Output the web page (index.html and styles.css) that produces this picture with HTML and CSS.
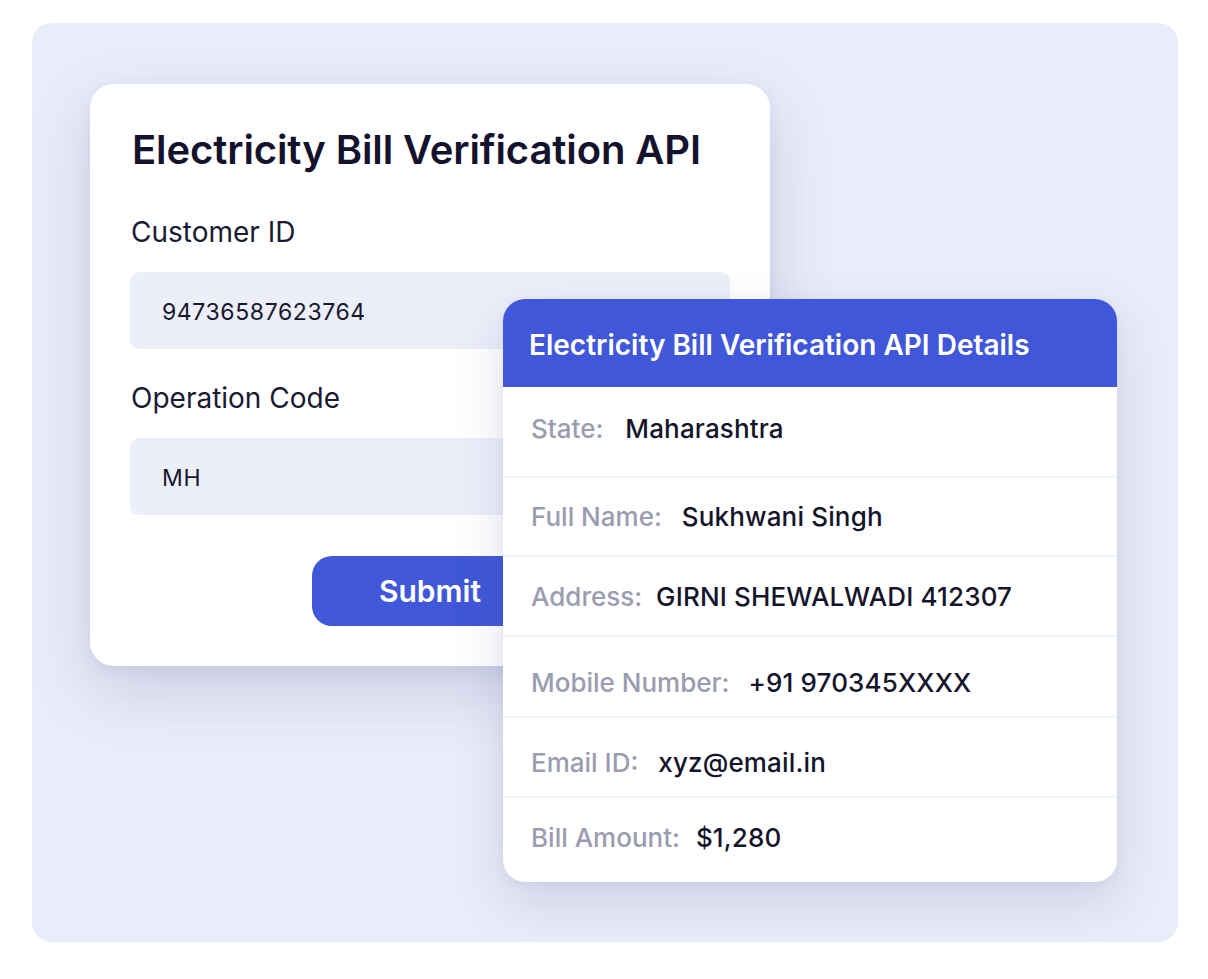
FILE: index.html
```html
<!DOCTYPE html>
<html lang="en">
<head>
<meta charset="utf-8">
<title>Electricity Bill Verification API</title>
<link rel="stylesheet" href="styles.css">
</head>
<body>
<div class="page">
  <div class="panel">
    <div class="form-card">
      <h1 class="form-title">Electricity Bill Verification API</h1>
      <div class="field">
        <div class="field-label">Customer ID</div>
        <div class="field-input">94736587623764</div>
      </div>
      <div class="field">
        <div class="field-label">Operation Code</div>
        <div class="field-input">MH</div>
      </div>
      <div class="actions">
        <button class="submit">Submit</button>
      </div>
    </div>

    <div class="details-card">
      <div class="details-head">Electricity Bill Verification API Details</div>
      <div class="row row-1"><span class="k">State:</span><span class="v">Maharashtra</span></div>
      <div class="row row-2"><span class="k">Full Name:</span><span class="v">Sukhwani Singh</span></div>
      <div class="row row-3"><span class="k">Address:</span><span class="v">GIRNI SHEWALWADI 412307</span></div>
      <div class="row row-4"><span class="k">Mobile Number:</span><span class="v">+91 970345XXXX</span></div>
      <div class="row row-5"><span class="k">Email ID:</span><span class="v">xyz@email.in</span></div>
      <div class="row row-6"><span class="k">Bill Amount:</span><span class="v">$1,280</span></div>
    </div>
  </div>
</div>
</body>
</html>
```

FILE: styles.css
```css
* { box-sizing: border-box; }
html, body { margin: 0; padding: 0; background: #ffffff; }
body {
  font-family: Inter, "Noto Sans", "Liberation Sans", sans-serif;
  color: #14142b;
}
.page {
  padding: 23px 30px 37px 32px;
}
.panel {
  position: relative;
  width: 1146px;
  height: 919px;
  background: #e9ecf9;
  border-radius: 20px;
  padding: 61px 0 0 58px;
}
.form-card {
  width: 680px;
  height: 582px;
  background: #ffffff;
  border-radius: 24px;
  padding: 42px 40px 40px 40px;
  box-shadow: 0 24px 60px rgba(90, 100, 150, 0.22), 0 4px 14px rgba(90, 100, 150, 0.08);
}
.form-title {
  margin: 0 0 0 2px;
  font-size: 40px;
  line-height: 48px;
  font-weight: 600;
  color: #13132d;
  letter-spacing: -0.1px;
}
.field { margin-top: 41px; }
.field + .field { margin-top: 32px; }
.field-label {
  font-size: 28px;
  line-height: 34px;
  font-weight: 400;
  color: #1a1a33;
  margin-left: 1px;
}
.field-input {
  margin-top: 23px;
  height: 77px;
  border-radius: 9px;
  background: #eceef9;
  display: flex;
  align-items: center;
  padding: 2px 0 0 32px;
  font-size: 23px;
  letter-spacing: 0.6px;
  color: #17172e;
}
.actions {
  display: flex;
  justify-content: center;
  margin-top: 41px;
}
.submit {
  width: 236px;
  height: 70px;
  border: none;
  border-radius: 20px;
  background: #3f57d8;
  color: #ffffff;
  font-family: inherit;
  font-size: 30px;
  font-weight: 600;
  padding: 0;
}
.details-card {
  position: absolute;
  left: 471px;
  top: 276px;
  width: 614px;
  height: 583px;
  background: #ffffff;
  border-radius: 22px;
  overflow: hidden;
  box-shadow: 0 20px 50px rgba(90, 100, 150, 0.2), 0 2px 10px rgba(90, 100, 150, 0.06);
}
.details-head {
  height: 88px;
  background: #3f57d8;
  color: #ffffff;
  font-size: 28px;
  font-weight: 600;
  display: flex;
  align-items: center;
  padding: 3px 0 0 26px;
  letter-spacing: 0;
}
.row {
  display: flex;
  align-items: center;
  gap: 22px;
  padding: 0 28px;
  border-bottom: 2px solid #f3f4fa;
  font-size: 26px;
  font-weight: 500;
}
.row-1 { height: 91px; padding-bottom: 6px; }
.row-2 { height: 79px; gap: 20px; }
.row-3 { height: 80px; gap: 14px; }
.row-4 { height: 81px; padding-top: 12px; gap: 19px; }
.row-5 { height: 80px; padding-top: 10px; gap: 20px; }
.row-6 { height: 84px; border-bottom: none; padding-bottom: 6px; gap: 16px; }
.k { color: #9a9caf; }
.v { color: #14142b; letter-spacing: 0.15px; }
```
